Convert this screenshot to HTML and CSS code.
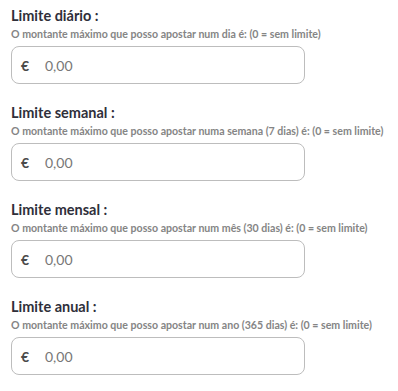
FILE: index.html
```html
<!DOCTYPE html>
<html lang="pt">
<head>
<meta charset="utf-8">
<link rel="stylesheet" href="styles.css">
</head>
<body>
<div class="limits">
  <section class="limit">
    <h3 class="limit-title">Limite diário :</h3>
    <p class="limit-desc">O montante máximo que posso apostar num dia é: (0 = sem limite)</p>
    <div class="field"><span class="currency">€</span><span class="value">0,00</span></div>
  </section>
  <section class="limit">
    <h3 class="limit-title">Limite semanal :</h3>
    <p class="limit-desc">O montante máximo que posso apostar numa semana (7 dias) é: (0 = sem limite)</p>
    <div class="field"><span class="currency">€</span><span class="value">0,00</span></div>
  </section>
  <section class="limit">
    <h3 class="limit-title">Limite mensal :</h3>
    <p class="limit-desc">O montante máximo que posso apostar num mês (30 dias) é: (0 = sem limite)</p>
    <div class="field"><span class="currency">€</span><span class="value">0,00</span></div>
  </section>
  <section class="limit">
    <h3 class="limit-title">Limite anual :</h3>
    <p class="limit-desc">O montante máximo que posso apostar num ano (365 dias) é: (0 = sem limite)</p>
    <div class="field"><span class="currency">€</span><span class="value">0,00</span></div>
  </section>
</div>
</body>
</html>
```
FILE: styles.css
```css
html, body {
  margin: 0;
  padding: 0;
  background: #ffffff;
}
body {
  font-family: "Lato", "Open Sans", sans-serif;
}
.limits {
  display: flex;
  flex-direction: column;
  gap: 20px;
  padding: 7px 0 0 11px;
}
.limit {
  display: flex;
  flex-direction: column;
}
.limit-title {
  margin: 0;
  font-size: 14.5px;
  line-height: 18px;
  font-weight: 700;
  color: #2f2f3a;
}
.limit-desc {
  margin: 2px 0 0 0;
  font-size: 10.6px;
  line-height: 14px;
  font-weight: 700;
  color: #858585;
  white-space: nowrap;
}
.field {
  box-sizing: border-box;
  margin-top: 5px;
  width: 294px;
  height: 38px;
  border: 1px solid #bdbdbd;
  border-radius: 8px;
  display: flex;
  align-items: center;
  padding-left: 9px;
}
.currency {
  font-size: 14px;
  font-weight: 700;
  color: #4a4a4a;
  width: 24px;
}
.value {
  font-size: 14px;
  color: #777777;
}
```
